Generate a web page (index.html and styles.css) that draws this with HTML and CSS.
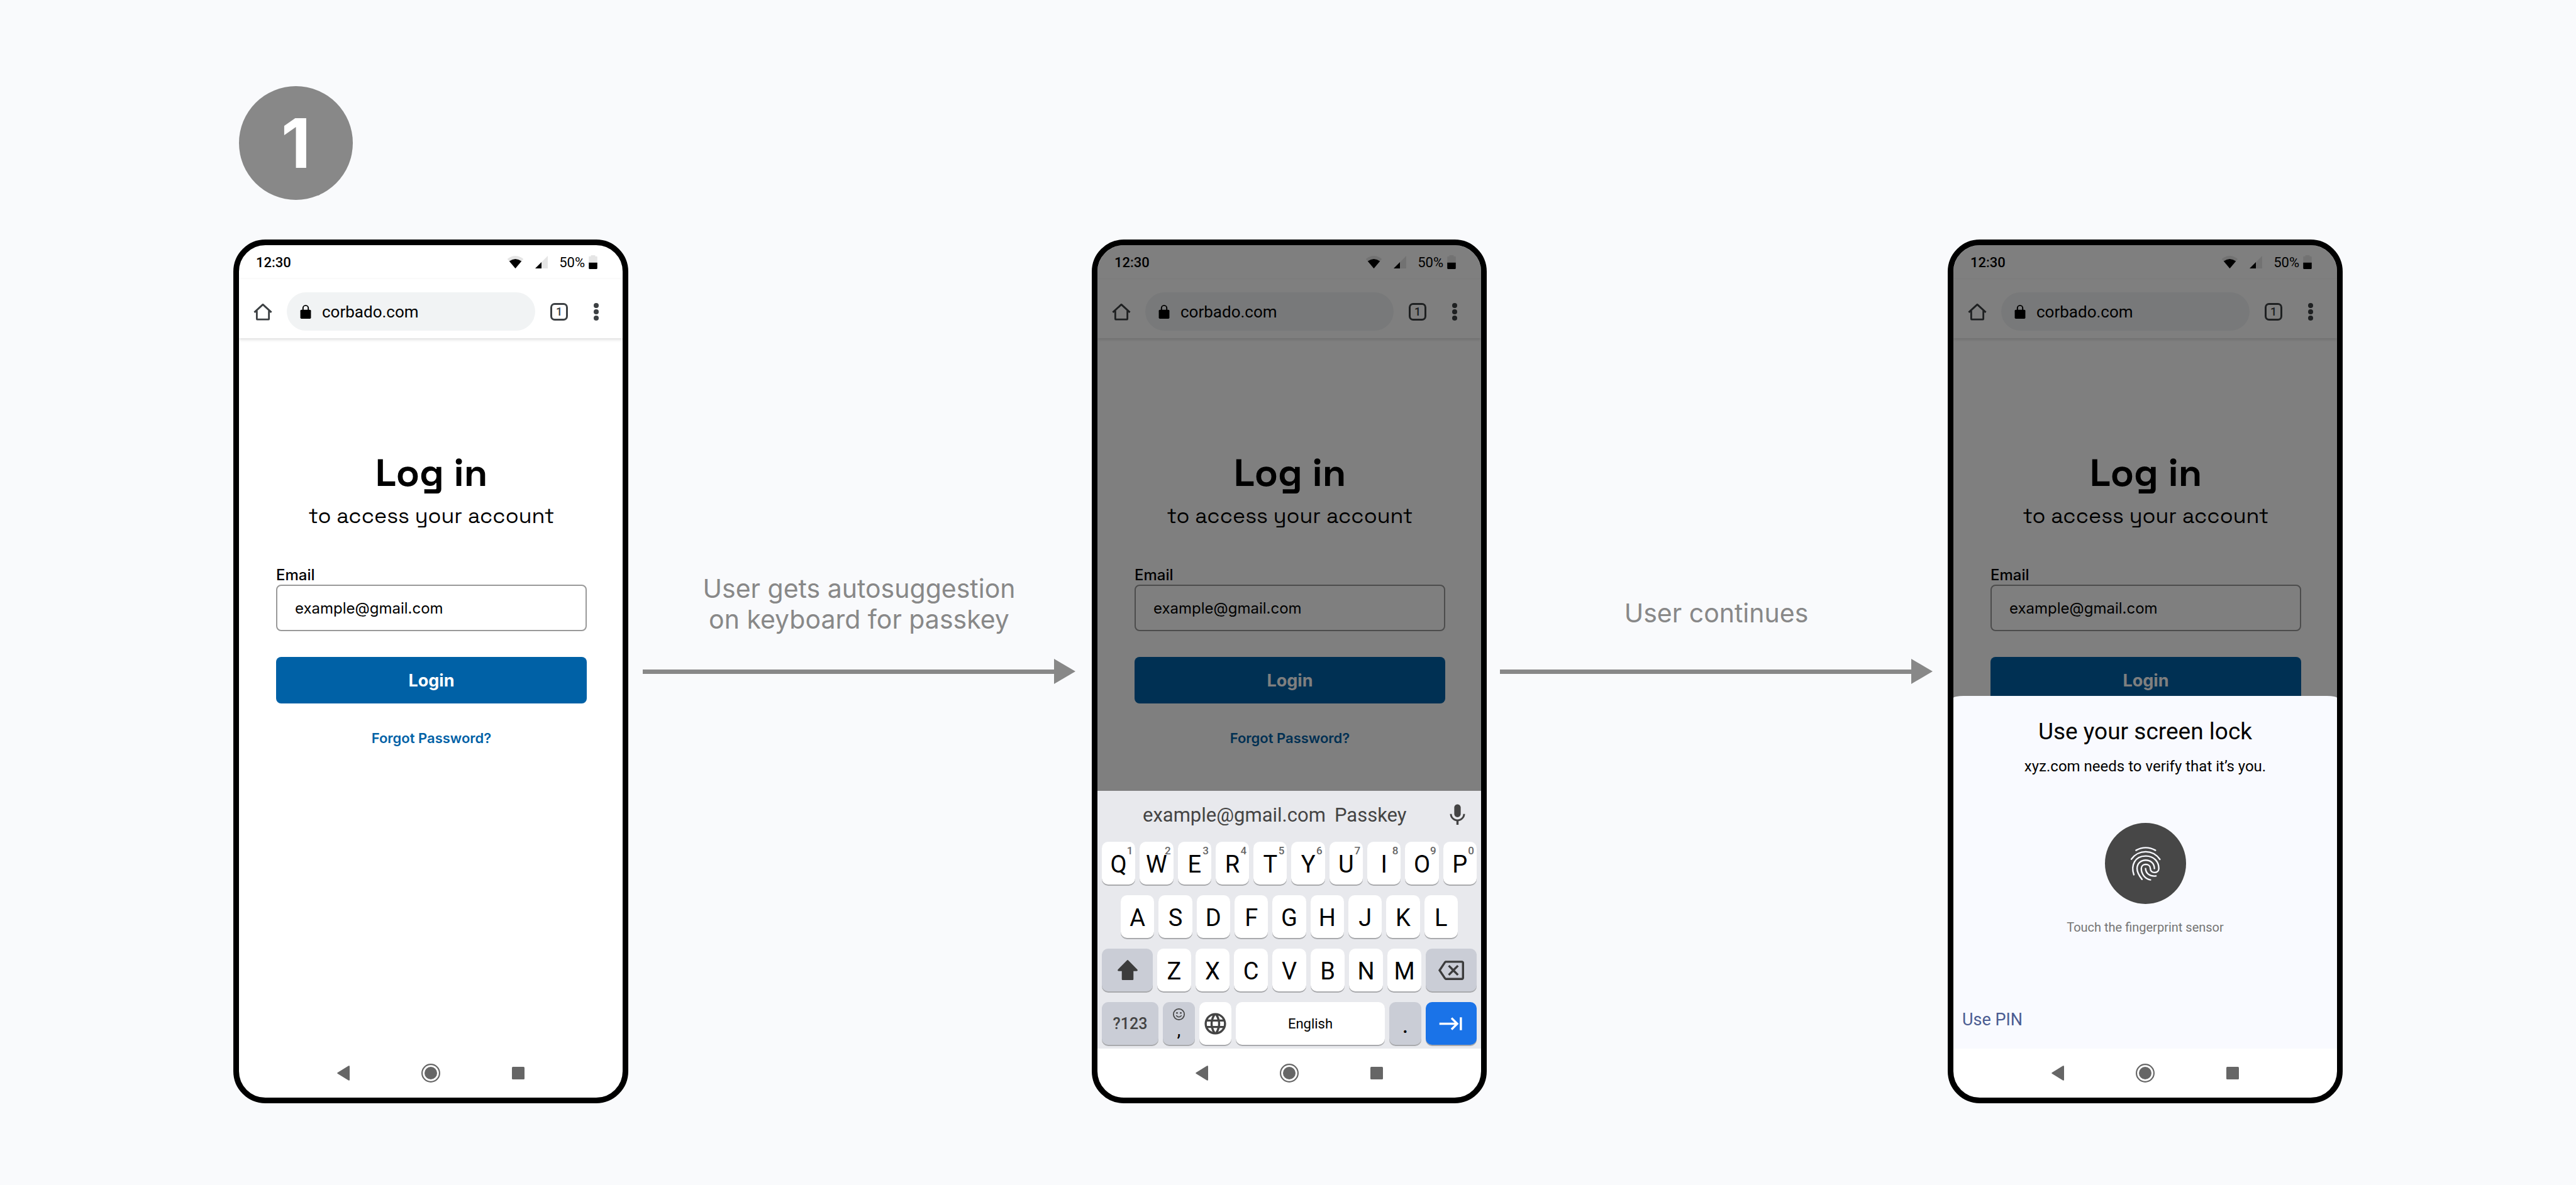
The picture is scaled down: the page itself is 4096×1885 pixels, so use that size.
FILE: index.html
```html
<!DOCTYPE html>
<html lang="en">
<head>
<meta charset="utf-8">
<meta name="viewport" content="width=device-width, initial-scale=1">
<title>Passkey login flow</title>
<link rel="stylesheet" href="styles.css">
</head>
<body>
<svg class="sprite" aria-hidden="true">
  <symbol id="wifi" viewBox="62 60 92 72"><path fill="#e5e5e5" d="M108 132 62 78Q108 42 154 78Z"/><path d="M108 132 73 91Q108 65 143 91Z"/></symbol>
  <symbol id="signal" viewBox="216 60 72 72"><path fill="#e5e5e5" d="M216 132 288 60V132Z"/><path d="M216 132 252 96V132Z"/></symbol>
  <symbol id="battery" viewBox="522 51 48 78"><path fill="#e5e5e5" d="M534 51h24v6h8q4 0 4 4v32h-48V61q0-4 4-4h8z"/><path d="M522 93h48v32q0 4-4 4h-40q-4 0-4-4z"/></symbol>
  <symbol id="home" viewBox="39 42 120 120"><g fill="none" stroke="#3c4043" stroke-width="10" stroke-linejoin="round"><path d="M51 105 99 61 147 105"/><path d="M65 96V142Q65 145 68 145H130Q133 145 133 142V96"/></g></symbol>
  <symbol id="lock" viewBox="310 60 64 84"><rect x="312" y="90" width="60" height="51" rx="6"/><path fill="none" stroke="#000" stroke-width="7" d="M327 92V81a15 15 0 0 1 30 0V92"/></symbol>
  <symbol id="dots" viewBox="0 0 8 28"><g fill="#3c4043"><circle cx="4" cy="4" r="4"/><circle cx="4" cy="14" r="4"/><circle cx="4" cy="24" r="4"/></g></symbol>
  <symbol id="back" viewBox="0 0 20 24"><path fill="#666" d="M1 11 18 .4Q20-.4 20 1.500V22.500Q20 24.400 18 23.600L1 13Q-.6 12 1 11Z"/></symbol>
  <symbol id="circle" viewBox="0 0 36 36"><circle cx="18" cy="18" r="16.700" fill="none" stroke="#666" stroke-width="2.600"/><circle cx="18" cy="18" r="12" fill="#666"/></symbol>
  <symbol id="square" viewBox="0 0 20 20"><rect width="20" height="20" rx="1.500" fill="#666"/></symbol>
  <symbol id="arrow" viewBox="0 0 34 40"><path fill="#888" d="M0 0 34 20 0 40Z"/></symbol>
</svg>

<main class="board">
  <div class="step">1</div>

  <div class="flow">
    <section class="phone" aria-label="Login page">
      <div class="screen">
        <div class="status"><span class="clock">12:30</span><svg class="wifi"><use href="#wifi"/></svg><svg class="signal"><use href="#signal"/></svg><span class="charge">50%</span><svg class="battery"><use href="#battery"/></svg></div>
        <div class="toolbar">
          <button class="icon-button" aria-label="Home"><svg class="home"><use href="#home"/></svg></button>
          <div class="address"><svg class="lock"><use href="#lock"/></svg><span>corbado.com</span></div>
          <button class="tabs" aria-label="Open tabs">1</button>
          <button class="icon-button more" aria-label="Menu"><svg class="dots"><use href="#dots"/></svg></button>
        </div>
        <form class="login">
          <h1>Log in</h1>
          <p class="lead">to access your account</p>
          <label for="email-1">Email</label>
          <input id="email-1" type="email" value="example@gmail.com">
          <button type="button" class="submit">Login</button>
          <a class="forgot" href="#forgot">Forgot Password?</a>
        </form>
      </div>
      <nav class="system">
        <button class="icon-button" aria-label="Back"><svg class="back"><use href="#back"/></svg></button>
        <button class="icon-button" aria-label="Home screen"><svg class="circle"><use href="#circle"/></svg></button>
        <button class="icon-button" aria-label="Recent apps"><svg class="square"><use href="#square"/></svg></button>
      </nav>
    </section>

    <div class="connector connector-first">
      <p class="caption">User gets autosuggestion<br>on keyboard for passkey</p>
      <div class="arrow"><span class="shaft"></span><svg class="head"><use href="#arrow"/></svg></div>
    </div>

    <section class="phone" aria-label="Keyboard suggestion">
      <div class="screen dimmed">
        <div class="status"><span class="clock">12:30</span><svg class="wifi"><use href="#wifi"/></svg><svg class="signal"><use href="#signal"/></svg><span class="charge">50%</span><svg class="battery"><use href="#battery"/></svg></div>
        <div class="toolbar">
          <button class="icon-button" aria-label="Home"><svg class="home"><use href="#home"/></svg></button>
          <div class="address"><svg class="lock"><use href="#lock"/></svg><span>corbado.com</span></div>
          <button class="tabs" aria-label="Open tabs">1</button>
          <button class="icon-button more" aria-label="Menu"><svg class="dots"><use href="#dots"/></svg></button>
        </div>
        <form class="login">
          <h1>Log in</h1>
          <p class="lead">to access your account</p>
          <label for="email-2">Email</label>
          <input id="email-2" type="email" value="example@gmail.com">
          <button type="button" class="submit">Login</button>
          <a class="forgot" href="#forgot">Forgot Password?</a>
        </form>
      </div>
      <div class="keyboard">
        <div class="suggestions">
          <button>example@gmail.com</button>
          <button>Passkey</button>
          <button class="mic" aria-label="Voice input"><svg viewBox="0 0 24 24"><path fill="#444" d="M12 14c1.660 0 2.990-1.340 2.990-3L15 5c0-1.660-1.340-3-3-3S9 3.340 9 5v6c0 1.660 1.340 3 3 3zm5.300-3c0 3-2.540 5.100-5.300 5.100S6.700 14 6.700 11H5c0 3.410 2.720 6.230 6 6.720V21h2v-3.280c3.280-.48 6-3.300 6-6.720h-1.700z"/></svg></button>
        </div>
        <div class="keys">
          <button class="key letter">Q<small>1</small></button><button class="key letter">W<small>2</small></button><button class="key letter">E<small>3</small></button><button class="key letter">R<small>4</small></button><button class="key letter">T<small>5</small></button><button class="key letter">Y<small>6</small></button><button class="key letter">U<small>7</small></button><button class="key letter">I<small>8</small></button><button class="key letter">O<small>9</small></button><button class="key letter">P<small>0</small></button>
        </div>
        <div class="keys keys-inset">
          <button class="key letter">A</button><button class="key letter">S</button><button class="key letter">D</button><button class="key letter">F</button><button class="key letter">G</button><button class="key letter">H</button><button class="key letter">J</button><button class="key letter">K</button><button class="key letter">L</button>
        </div>
        <div class="keys">
          <button class="key wide gray" aria-label="Shift"><svg class="shift" viewBox="0 0 38 38"><path fill="#3c3c3c" d="M17.600.8Q19-.6 20.400.8L37.300 18Q39 20.600 36 21H30V36.500Q30 38 28.500 38H9.500Q8 38 8 36.500V21H2Q-1 20.600.7 18Z"/></svg></button>
          <button class="key letter">Z</button><button class="key letter">X</button><button class="key letter">C</button><button class="key letter">V</button><button class="key letter">B</button><button class="key letter">N</button><button class="key letter">M</button>
          <button class="key wide gray" aria-label="Backspace"><svg class="glyph" viewBox="0 0 24 24"><path fill="#3c3c3c" d="M22 3H7c-.69 0-1.230.35-1.590.88L0 12l5.410 8.110c.36.53.9.89 1.590.89h15c1.100 0 2-.9 2-2V5c0-1.100-.9-2-2-2zm0 16H7.070L2.400 12l4.660-7H22v14zm-11.590-2L14 13.410 17.590 17 19 15.590 15.410 12 19 8.410 17.590 7 14 10.590 10.410 7 9 8.410 12.590 12 9 15.590z"/></svg></button>
        </div>
        <div class="keys">
          <button class="key symbols gray">?123</button>
          <button class="key narrow gray comma" aria-label="Comma"><svg class="smiley" viewBox="0 0 22 22"><circle cx="11" cy="11" r="10" fill="none" stroke="#444" stroke-width="2"/><circle cx="7.500" cy="8.500" r="1.600" fill="#444"/><circle cx="14.500" cy="8.500" r="1.600" fill="#444"/><path d="M6 13Q11 19 16 13" fill="none" stroke="#444" stroke-width="1.800"/></svg><span>,</span></button>
          <button class="key narrow" aria-label="Language"><svg class="glyph" viewBox="0 0 24 24"><path fill="#444" d="M11.990 2C6.470 2 2 6.480 2 12s4.470 10 9.990 10C17.520 22 22 17.520 22 12S17.520 2 11.990 2zm6.930 6h-2.950c-.32-1.250-.78-2.450-1.380-3.560 1.840.63 3.370 1.910 4.330 3.560zM12 4.040c.83 1.200 1.480 2.530 1.910 3.960h-3.820c.43-1.430 1.080-2.760 1.910-3.960zM4.260 14C4.100 13.360 4 12.690 4 12s.1-1.360.26-2h3.380c-.08.66-.14 1.320-.14 2 0 .68.06 1.340.14 2H4.260zm.82 2h2.950c.32 1.250.78 2.450 1.380 3.560-1.840-.63-3.370-1.900-4.330-3.560zm2.950-8H5.080c.96-1.660 2.490-2.930 4.330-3.560C8.810 5.550 8.350 6.750 8.030 8zM12 19.960c-.83-1.200-1.480-2.530-1.910-3.960h3.820c-.43 1.430-1.080 2.760-1.910 3.960zM14.340 14H9.660c-.09-.66-.16-1.320-.16-2 0-.68.07-1.350.16-2h4.680c.09.65.16 1.320.16 2 0 .68-.07 1.340-.16 2zm.25 5.560c.6-1.110 1.060-2.310 1.380-3.560h2.950c-.96 1.650-2.490 2.930-4.330 3.560zM16.360 14c.08-.66.14-1.320.14-2 0-.68-.06-1.340-.14-2h3.380c.16.64.26 1.310.26 2s-.1 1.360-.26 2h-3.380z"/></svg></button>
          <button class="key space">English</button>
          <button class="key letter narrow gray">.</button>
          <button class="key wide enter" aria-label="Next field"><svg class="glyph" viewBox="0 0 24 24"><path fill="#fff" d="M11.590 7.410 15.170 11H1v2h14.170l-3.590 3.590L13 18l6-6-6-6-1.410 1.410zM20 6v12h2V6h-2z"/></svg></button>
        </div>
      </div>
      <nav class="system">
        <button class="icon-button" aria-label="Back"><svg class="back"><use href="#back"/></svg></button>
        <button class="icon-button" aria-label="Home screen"><svg class="circle"><use href="#circle"/></svg></button>
        <button class="icon-button" aria-label="Recent apps"><svg class="square"><use href="#square"/></svg></button>
      </nav>
    </section>

    <div class="connector connector-second">
      <p class="caption">User continues</p>
      <div class="arrow"><span class="shaft"></span><svg class="head"><use href="#arrow"/></svg></div>
    </div>

    <section class="phone" aria-label="Screen lock prompt">
      <div class="screen dimmed">
        <div class="status"><span class="clock">12:30</span><svg class="wifi"><use href="#wifi"/></svg><svg class="signal"><use href="#signal"/></svg><span class="charge">50%</span><svg class="battery"><use href="#battery"/></svg></div>
        <div class="toolbar">
          <button class="icon-button" aria-label="Home"><svg class="home"><use href="#home"/></svg></button>
          <div class="address"><svg class="lock"><use href="#lock"/></svg><span>corbado.com</span></div>
          <button class="tabs" aria-label="Open tabs">1</button>
          <button class="icon-button more" aria-label="Menu"><svg class="dots"><use href="#dots"/></svg></button>
        </div>
        <form class="login">
          <h1>Log in</h1>
          <p class="lead">to access your account</p>
          <label for="email-3">Email</label>
          <input id="email-3" type="email" value="example@gmail.com">
          <button type="button" class="submit">Login</button>
        </form>
      </div>
      <div class="sheet">
        <h2>Use your screen lock</h2>
        <p class="reason">xyz.com needs to verify that it’s you.</p>
        <div class="sensor"><svg viewBox="-3 -15 270 270" fill="none" stroke="#f9faff" stroke-width="8.500" stroke-linecap="round"><path d="M80 44Q135 14 190 44"/><path d="M54 94C72 68 103 52 135 52S196 68 215 95"/><path d="M68 182C50 130 72 76 135 76C185 76 209 112 209 147C209 176 161 177 161 147C161 116 110 116 110 147C110 180 132 205 162 211"/><path d="M114 208C93 182 86 165 86 147C86 84 184 84 184 147"/><path d="M134 147C136 175 158 193 193 189"/></svg></div>
        <p class="hint">Touch the fingerprint sensor</p>
        <a class="pin" href="#pin">Use PIN</a>
      </div>
      <nav class="system">
        <button class="icon-button" aria-label="Back"><svg class="back"><use href="#back"/></svg></button>
        <button class="icon-button" aria-label="Home screen"><svg class="circle"><use href="#circle"/></svg></button>
        <button class="icon-button" aria-label="Recent apps"><svg class="square"><use href="#square"/></svg></button>
      </nav>
    </section>
  </div>
</main>
</body>
</html>
```
FILE: styles.css
```css
* { box-sizing: border-box; }

body {
  margin: 0;
  background: #f9fafc;
  color: #000;
  font-family: Inter, "Liberation Sans", sans-serif;
}

h1, h2, p { margin: 0; }

button {
  margin: 0;
  padding: 0;
  border: 0;
  background: none;
  color: inherit;
  font: inherit;
}

a { text-decoration: none; }
svg { display: block; flex: none; }
.sprite { display: none; }

/* Board */
.board {
  min-height: 100vh;
  padding: 137px 371px 130px;
}

.step {
  display: flex;
  align-items: center;
  justify-content: center;
  width: 181px;
  height: 181px;
  margin: 0 0 63px 9px;
  border-radius: 50%;
  background: #888;
  color: #fff;
  font-size: 109px;
  font-weight: 700;
  line-height: 1;
}

.flow {
  display: grid;
  grid-template-columns: 628px 737fr 628px 733fr 628px;
}

/* Arrows between the phones */
.connector {
  display: grid;
  grid-template-rows: 1fr auto 1fr;
}
.connector-first { padding: 0 26px 0 23px; }
.connector-second { padding: 0 24px 0 21px; }

.caption {
  align-self: end;
  padding-bottom: 38px;
  color: #888;
  font-size: 41px;
  line-height: 49px;
  text-align: center;
}
.connector-second .caption { padding-bottom: 48px; }

.arrow { display: flex; align-items: center; }
.shaft { flex: 1; height: 7px; background: #888; }
.head { width: 34px; height: 40px; }

/* Phone */
.phone {
  display: flex;
  flex-direction: column;
  aspect-ratio: 628 / 1374;
  border: 9px solid #000;
  border-radius: 51px;
  background: #fff;
  overflow: hidden;
  font-family: Roboto, "Liberation Sans", sans-serif;
}

.screen {
  position: relative;
  flex: 1;
  min-height: 0;
  overflow: hidden;
}
.dimmed::after {
  content: "";
  position: absolute;
  inset: 0;
  background: rgba(0, 0, 0, 0.5);
}

.status {
  display: flex;
  align-items: center;
  height: 54px;
  padding: 0 40px 0 27px;
  font-size: 22px;
}
.clock { flex: 1; font-weight: 500; }
.wifi { width: 27px; height: 20px; margin-right: 18px; }
.signal { width: 20px; height: 20px; margin-right: 18px; }
.battery { width: 14px; height: 22px; margin-left: 6px; }

.toolbar {
  display: flex;
  align-items: center;
  gap: 21px;
  padding: 21px 25px 12px 21px;
  box-shadow: 0 2px 5px rgba(0, 0, 0, 0.15);
}
.icon-button { display: flex; align-items: center; justify-content: center; }
.home { width: 34px; height: 34px; }
.address {
  display: flex;
  flex: 1;
  align-items: center;
  gap: 17px;
  height: 61px;
  margin-right: 3px;
  padding: 0 21px;
  border-radius: 31px;
  background: #f1f3f4;
  font-size: 26px;
}
.lock { width: 18px; height: 24px; }
.tabs {
  width: 28px;
  height: 28px;
  border: 3px solid #3c4043;
  border-radius: 7px;
  color: #3c4043;
  font-size: 18px;
  font-weight: 500;
  line-height: 22px;
}
.more { width: 34px; margin-left: 7px; }
.dots { width: 8px; height: 28px; }

/* Login form */
.login {
  display: flex;
  flex-direction: column;
  padding: 179px 57px 0 59px;
  font-family: Inter, "Liberation Sans", sans-serif;
}
.login h1 {
  font-family: "Space Grotesk", Inter, sans-serif;
  font-size: 61px;
  font-weight: 600;
  line-height: 70px;
  text-align: center;
}
.lead {
  margin: 14px 0 58px;
  font-family: "Space Grotesk", Inter, sans-serif;
  font-size: 34px;
  line-height: 40px;
  text-align: center;
}
.login label {
  font-size: 24px;
  font-weight: 500;
  line-height: 31px;
}
.login input {
  width: 100%;
  height: 74px;
  padding: 0 28px;
  border: 2px solid #999;
  border-radius: 8px;
  background: #fff;
  color: #000;
  font: inherit;
  font-size: 24px;
}
.submit {
  height: 74px;
  margin: 41px 0;
  border-radius: 8px;
  background: #0061a6;
  color: #fff;
  font-size: 27px;
  font-weight: 700;
}
.forgot {
  align-self: center;
  color: #0061a6;
  font-size: 22px;
  font-weight: 600;
  line-height: 28px;
}

/* System navigation */
.system {
  display: grid;
  flex: none;
  grid-template-columns: repeat(3, 139px);
  justify-content: center;
  height: 78px;
}
.back { width: 20px; height: 24px; }
.circle { width: 30px; height: 30px; }
.square { width: 20px; height: 20px; }

/* Keyboard */
.keyboard {
  display: flex;
  flex: none;
  flex-direction: column;
  gap: 17px;
  padding-bottom: 6px;
  background: #e8e9ed;
}
.suggestions {
  display: flex;
  align-items: center;
  gap: 14px;
  height: 76px;
  margin-bottom: -12px;
  padding: 0 17px 0 72px;
  color: #444;
  font-size: 31px;
}
.mic { margin-left: auto; }
.mic svg, .glyph { width: 41px; height: 41px; }

.keys { display: flex; gap: 7px; padding: 0 7px; }
.keys-inset { padding: 0 37px; }
.key {
  position: relative;
  display: flex;
  flex: 1;
  align-items: center;
  justify-content: center;
  height: 68px;
  border-radius: 10px;
  background: #fff;
  box-shadow: 0 2px 0 #a9aaad;
}
.letter { padding-top: 4px; font-size: 38px; }
.letter small {
  position: absolute;
  top: 5px;
  right: 4px;
  color: #666;
  font-size: 17px;
  font-weight: 500;
  line-height: 18px;
}
.wide { flex: 0 0 81px; }
.narrow { flex: 0 0 51px; }
.symbols { flex: 0 0 90px; color: #444; font-size: 25px; font-weight: 500; }
.space { font-size: 22px; }
.gray { background: #cacdd6; }
.enter { background: #1a73e8; }
.shift { width: 32px; height: 32px; }
.comma {
  flex-direction: column;
  justify-content: flex-start;
  padding-top: 10px;
  font-size: 30px;
  line-height: 30px;
}
.smiley { width: 19px; height: 19px; }

/* Screen lock sheet, its rounded top edge lapping over the dimmed page */
.sheet {
  position: relative;
  display: flex;
  flex: none;
  flex-direction: column;
  align-items: center;
  margin-top: -3px;
  padding: 34px 14px 29px;
  border-radius: 16px 16px 0 0 / 3px 3px 0 0;
  background: #f9faff;
}
.sheet h2 { font-size: 37px; font-weight: 400; line-height: 46px; }
.reason { margin: 17px 0 75px; font-size: 24px; line-height: 30px; }
.sensor {
  display: flex;
  align-items: center;
  justify-content: center;
  width: 129px;
  height: 129px;
  border-radius: 50%;
  background: #474747;
}
.sensor svg { width: 76px; height: 76px; }
.hint { margin: 24px 0 117px; color: #757575; font-size: 20px; line-height: 26px; }
.pin { align-self: flex-start; color: #4b5c92; font-size: 27px; line-height: 34px; }
```
